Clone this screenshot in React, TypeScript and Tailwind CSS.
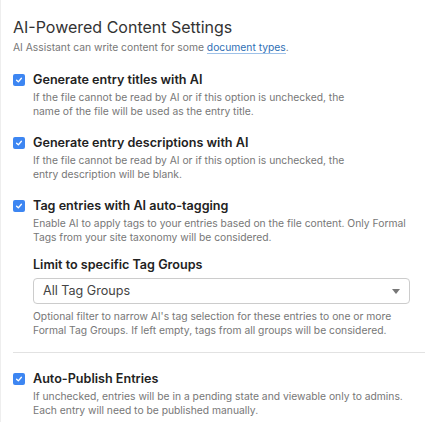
import React from "react";

function Check() {
  return (
    <span className="mt-[3px] flex h-[12px] w-[12px] shrink-0 items-center justify-center rounded-[2px] bg-[#3d86f2]">
      <svg width="8" height="8" viewBox="0 0 10 10" fill="none">
        <path d="M2 5.2 L4.2 7.3 L8 2.8" stroke="white" strokeWidth="1.7" strokeLinecap="round" strokeLinejoin="round" />
      </svg>
    </span>
  );
}

function Option({ title, desc }: { title: string; desc: React.ReactNode }) {
  return (
    <div className="flex gap-[8px]">
      <Check />
      <div>
        <div className="text-[12.6px] font-semibold leading-[17px] text-[#222]">{title}</div>
        <div className="mt-[2px] text-[10.3px] leading-[14px] text-[#777]">{desc}</div>
      </div>
    </div>
  );
}

export default function App() {
  return (
    <div className="min-h-[422px] border-l border-[#eee] bg-white pl-3 pr-0 pt-[16px] font-['Inter',sans-serif]">
      <h1 className="text-[16px] font-normal leading-[22px] text-[#333]">AI-Powered Content Settings</h1>
      <p className="mt-[2px] text-[10.3px] leading-[14px] text-[#777]">
        AI Assistant can write content for some{" "}
        <a className="border-b border-[#9ec1e8] text-[#2f6fb5]">document types</a>.
      </p>

      <div className="mt-[17px] flex flex-col gap-[16px]">
        <Option
          title="Generate entry titles with AI"
          desc={<>If the file cannot be read by AI or if this option is unchecked, the<br />name of the file will be used as the entry title.</>}
        />
        <Option
          title="Generate entry descriptions with AI"
          desc={<>If the file cannot be read by AI or if this option is unchecked, the<br />entry description will be blank.</>}
        />
        <Option
          title="Tag entries with AI auto-tagging"
          desc={<>Enable AI to apply tags to your entries based on the file content. Only Formal<br />Tags from your site taxonomy will be considered.</>}
        />
      </div>

      <div className="ml-[20px] mt-[12px]">
        <div className="text-[12.6px] font-semibold leading-[17px] text-[#222]">Limit to specific Tag Groups</div>
        <div className="mt-[5px] flex h-[26px] w-[377px] items-center justify-between rounded-[4px] border border-[#ccc] px-[9px]">
          <span className="text-[12.6px] text-[#444]">All Tag Groups</span>
          <svg width="8" height="5" viewBox="0 0 8 5"><path d="M0 0 H8 L4 5 Z" fill="#777" /></svg>
        </div>
        <div className="mt-[5px] text-[10.3px] leading-[14px] text-[#777]">
          Optional filter to narrow AI's tag selection for these entries to one or more<br />
          Formal Tag Groups. If left empty, tags from all groups will be considered.
        </div>
      </div>

      <hr className="mt-[15px] border-t border-[#e2e2e2]" />

      <div className="mt-[17px]">
        <Option
          title="Auto-Publish Entries"
          desc={<>If unchecked, entries will be in a pending state and viewable only to admins.<br />Each entry will need to be published manually.</>}
        />
      </div>
    </div>
  );
}
